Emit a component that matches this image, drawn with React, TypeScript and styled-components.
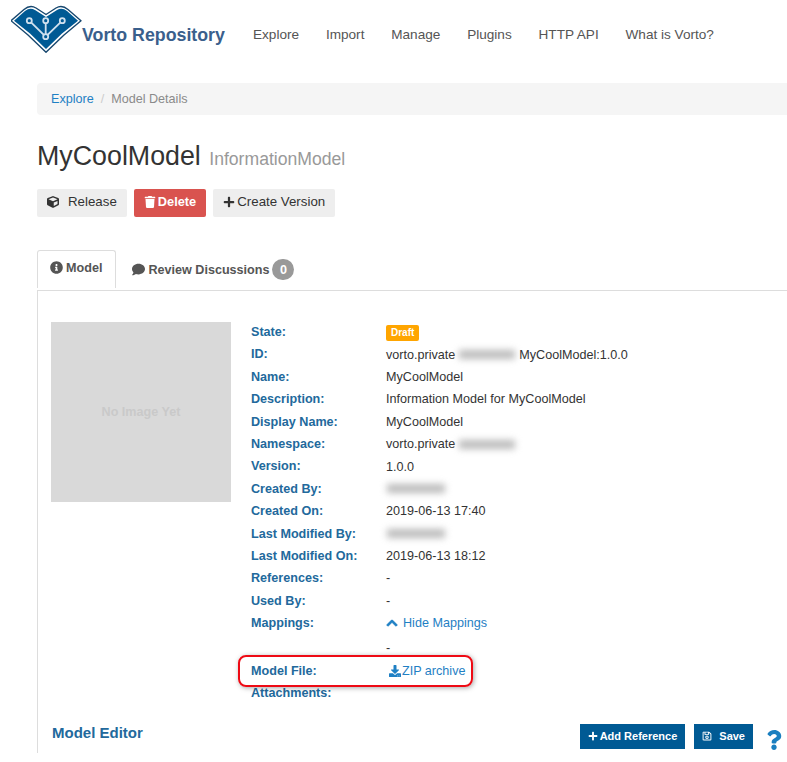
import { FC, Fragment, ReactNode } from "react";
import styled, { createGlobalStyle } from "styled-components";
import {
  FaChevronUp,
  FaComment,
  FaCube,
  FaDownload,
  FaInfoCircle,
  FaPlus,
  FaQuestion,
  FaRegSave,
  FaTrash,
} from "react-icons/fa";

const GlobalStyle = createGlobalStyle`
  html, body {
    margin: 0;
    padding: 0;
    background: #fff;
    overflow: hidden;
  }
  body {
    width: 787px;
    height: 762px;
    font-family: "Liberation Sans", Arial, sans-serif;
    font-size: 12.6px;
    color: #333;
  }
`;

const Page = styled.div`
  width: 787px;
  height: 762px;
  overflow: hidden;
  position: relative;
`;

const Navbar = styled.header`
  display: flex;
  align-items: flex-start;
  height: 83px;
  padding-left: 11px;
  box-sizing: border-box;
`;

const Brand = styled.div`
  display: flex;
  width: 242px;
  flex-shrink: 0;
`;

const BrandName = styled.span`
  margin: 25px 0 0;
  font-size: 17.8px;
  line-height: 21px;
  font-weight: 700;
  color: #3a5f8c;
  white-space: nowrap;
`;

const NavList = styled.nav`
  display: flex;
  gap: 26.800px;
  padding-top: 27px;
`;

const NavItem = styled.a`
  font-size: 13.6px;
  line-height: 16px;
  color: #555;
`;

const Content = styled.main`
  padding-left: 37px;
`;

const Breadcrumb = styled.div`
  display: flex;
  align-items: center;
  height: 32px;
  padding-left: 14px;
  background: #f5f5f5;
  border-radius: 4px 0 0 4px;
  color: #8a8a8a;
`;

const CrumbLink = styled.a`
  color: #1f80c4;
`;

const CrumbDivider = styled.span`
  padding: 0 7px;
  color: #ccc;
`;

const Title = styled.h1`
  margin: 26px 0 0;
  font-size: 26.8px;
  line-height: 31px;
  font-weight: 400;
  color: #333;
`;

const Subtitle = styled.small`
  font-size: 17.6px;
  color: #999;
  margin-left: 1px;
`;

const ButtonRow = styled.div`
  display: flex;
  gap: 7px;
  margin-top: 14px;
`;

const Button = styled.button<{ $variant?: "danger" | "primary" }>`
  display: inline-flex;
  align-items: center;
  justify-content: center;
  box-sizing: border-box;
  border: 0;
  padding: 0 10px 3px;
  height: 28px;
  border-radius: 2px;
  font-family: inherit;
  font-size: ${({ $variant }) => ($variant === "danger" ? "12.8px" : "13.3px")};
  font-weight: ${({ $variant }) => ($variant === "danger" ? 700 : 400)};
  background: ${({ $variant }) =>
    $variant === "danger" ? "#d9534f" : "#eeeeee"};
  color: ${({ $variant }) => ($variant === "danger" ? "#fff" : "#333")};
`;

const ButtonIcon = styled.span<{ $gap: number }>`
  display: inline-flex;
  font-size: 12px;
  margin-right: ${({ $gap }) => $gap}px;
`;

const Tabs = styled.div`
  display: flex;
  margin-top: 33px;
  height: 40px;
`;

const Tab = styled.div<{ $active?: boolean }>`
  display: flex;
  align-items: center;
  box-sizing: border-box;
  font-weight: 700;
  color: #555;
  height: ${({ $active }) => ($active ? "38px" : "36px")};
  padding: ${({ $active }) => ($active ? "0 13px 4px 12px" : "3px 0 0 16px")};
  ${({ $active }) =>
    $active
      ? `border: 1px solid #ddd; border-bottom: 0; border-radius: 3px 3px 0 0;`
      : ""}
`;

const TabIcon = styled.span`
  display: inline-flex;
  font-size: 13px;
  margin-right: 3px;
`;

const Badge = styled.span`
  display: inline-flex;
  align-items: center;
  justify-content: center;
  width: 22px;
  height: 21px;
  margin-left: 3px;
  border-radius: 11px;
  background: #999;
  color: #fff;
`;

const Panel = styled.section`
  height: 463px;
  box-sizing: border-box;
  border-top: 1px solid #ddd;
  border-left: 1px solid #ddd;
  padding: 31px 0 0 13px;
`;

const DetailLayout = styled.div`
  display: flex;
  align-items: flex-start;
`;

const Placeholder = styled.div`
  display: flex;
  align-items: center;
  justify-content: center;
  width: 180px;
  height: 180px;
  flex-shrink: 0;
  background: #d9d9d9;
  color: #c9c9c9;
  font-weight: 700;
`;

const Details = styled.dl`
  margin: -1px 0 0 20px;
  display: grid;
  grid-template-columns: 135px 1fr;
  align-items: center;
  width: 420px;
`;

const Label = styled.dt`
  height: 22.4px;
  line-height: 22.4px;
  font-weight: 700;
  color: #22699c;
  white-space: nowrap;
`;

const Value = styled.dd`
  display: flex;
  align-items: center;
  height: 22.4px;
  margin: 0;
  white-space: nowrap;
  color: #333;
`;

const DashRow = styled.div`
  grid-column: 1 / 3;
  padding: 3px 0 0 135px;
  line-height: 22.4px;
`;

const DraftLabel = styled.span`
  display: inline-block;
  padding: 1px 5px;
  margin-top: 2px;
  background: #ffa500;
  color: #fff;
  border-radius: 2px;
  font-size: 10px;
  font-weight: 700;
  line-height: 14px;
`;

const Redacted = styled.span<{ $width: number; $side: number }>`
  display: inline-block;
  width: ${({ $width }) => $width}px;
  height: 9px;
  margin: 0 ${({ $side }) => $side}px;
  background: #bbbbbb;
  filter: blur(3.500px);
`;

const Anchor = styled.a`
  display: inline-flex;
  align-items: center;
  color: #1f80c4;
`;

const AnchorIcon = styled.span<{ $inset?: number; $gap: number }>`
  display: inline-flex;
  font-size: 12px;
  margin-left: ${({ $inset = 0 }) => $inset}px;
  margin-right: ${({ $gap }) => $gap}px;
`;

const HeavyChevron = styled(FaChevronUp)`
  stroke: currentColor;
  stroke-width: 40px;
`;

const Highlight = styled.div`
  position: absolute;
  left: 238px;
  top: 655px;
  width: 235px;
  height: 32px;
  box-sizing: border-box;
  border: 2px solid #ee0a14;
  border-radius: 8px;
  box-shadow: 1px 1px 5px rgba(0, 0, 0, 0.35);
  pointer-events: none;
`;

const EditorBar = styled.div`
  display: flex;
  align-items: flex-start;
  margin-top: 19px;
  padding: 0 3px 0 1px;
`;

const EditorTitle = styled.h3`
  flex: 1;
  margin: 1px 0 0;
  font-size: 15px;
  line-height: 16px;
  font-weight: 700;
  color: #22699c;
`;

const ActionButton = styled.button`
  display: inline-flex;
  align-items: center;
  box-sizing: border-box;
  height: 25px;
  padding: 0 8px;
  margin-right: 9px;
  border: 0;
  background: #005a94;
  color: #fff;
  font-family: inherit;
  font-size: 11px;
  font-weight: 700;
`;

const ActionIcon = styled.span<{ $gap: number }>`
  display: inline-flex;
  font-size: 10px;
  margin-right: ${({ $gap }) => $gap}px;
`;

const HelpIcon = styled.span`
  display: inline-flex;
  margin: 6px 0 0 2px;
  font-size: 20px;
  color: #1a7fc0;
`;

const Logo: FC = () => (
  <svg width="71" height="54" viewBox="0 0 71 54">
    <path
      d="M0 20.700 L13 9.500 Q19 4.500 25 8 L35 14.500 L45 8 Q51 4.500 57 9.500 L70 20.700 L53 35 L35 52.300 L17 35 Z"
      fill="#fff"
      stroke="#17476e"
      strokeWidth="1.4"
      strokeLinejoin="round"
    />
    <path
      d="M3 20.700 L14 11 Q19 7 24 10 L35 17 L46 10 Q51 7 56 11 L67 20.700 L51 33.500 L35 49 L19 33.500 Z"
      fill="#005a94"
    />
    <g stroke="#cfe0ee" strokeWidth="1.800" fill="none">
      <path d="M18.300 20.700 L34.700 36.700 L51.300 20.700 M34.700 20.700 L34.700 36.700" />
      <circle cx="18.300" cy="20.700" r="2.500" fill="#005a94" />
      <circle cx="51.300" cy="20.700" r="2.500" fill="#005a94" />
      <circle cx="34.700" cy="20.700" r="2.500" fill="#005a94" />
      <circle cx="34.700" cy="36.700" r="2.500" fill="#005a94" />
    </g>
  </svg>
);

interface IRow {
  label: string;
  value: ReactNode;
}

const rows: IRow[] = [
  { label: "State:", value: <DraftLabel>Draft</DraftLabel> },
  {
    label: "ID:",
    value: (
      <>
        vorto.private
        <Redacted $width={56} $side={4} />
        MyCoolModel:1.0.0
      </>
    ),
  },
  { label: "Name:", value: "MyCoolModel" },
  { label: "Description:", value: "Information Model for MyCoolModel" },
  { label: "Display Name:", value: "MyCoolModel" },
  {
    label: "Namespace:",
    value: (
      <>
        vorto.private
        <Redacted $width={56} $side={4} />
      </>
    ),
  },
  { label: "Version:", value: "1.0.0" },
  { label: "Created By:", value: <Redacted $width={58} $side={1} /> },
  { label: "Created On:", value: "2019-06-13 17:40" },
  { label: "Last Modified By:", value: <Redacted $width={58} $side={1} /> },
  { label: "Last Modified On:", value: "2019-06-13 18:12" },
  { label: "References:", value: "-" },
  { label: "Used By:", value: "-" },
  {
    label: "Mappings:",
    value: (
      <Anchor>
        <AnchorIcon $gap={5}>
          <HeavyChevron />
        </AnchorIcon>
        Hide Mappings
      </Anchor>
    ),
  },
];

const App: FC = () => (
  <Page>
    <GlobalStyle />
    <Navbar>
      <Brand>
        <Logo />
        <BrandName>Vorto Repository</BrandName>
      </Brand>
      <NavList>
        {["Explore", "Import", "Manage", "Plugins", "HTTP API", "What is Vorto?"].map((item) => (
          <NavItem key={item}>{item}</NavItem>
        ))}
      </NavList>
    </Navbar>
    <Content>
      <Breadcrumb>
        <CrumbLink>Explore</CrumbLink>
        <CrumbDivider>/</CrumbDivider>
        Model Details
      </Breadcrumb>
      <Title>
        MyCoolModel <Subtitle>InformationModel</Subtitle>
      </Title>
      <ButtonRow>
        <Button>
          <ButtonIcon $gap={9}>
            <FaCube />
          </ButtonIcon>
          Release
        </Button>
        <Button $variant="danger">
          <ButtonIcon $gap={2}>
            <FaTrash />
          </ButtonIcon>
          Delete
        </Button>
        <Button>
          <ButtonIcon $gap={2}>
            <FaPlus />
          </ButtonIcon>
          Create Version
        </Button>
      </ButtonRow>
      <Tabs>
        <Tab $active>
          <TabIcon>
            <FaInfoCircle />
          </TabIcon>
          Model
        </Tab>
        <Tab>
          <TabIcon>
            <FaComment />
          </TabIcon>
          Review Discussions
          <Badge>0</Badge>
        </Tab>
      </Tabs>
      <Panel>
        <DetailLayout>
          <Placeholder>No Image Yet</Placeholder>
          <Details>
            {rows.map((row) => (
              <Fragment key={row.label}>
                <Label>{row.label}</Label>
                <Value>{row.value}</Value>
              </Fragment>
            ))}
            <DashRow>-</DashRow>
            <Label>Model File:</Label>
            <Value>
              <Anchor>
                <AnchorIcon $inset={3} $gap={1}>
                  <FaDownload />
                </AnchorIcon>
                ZIP archive
              </Anchor>
            </Value>
            <Label>Attachments:</Label>
            <Value />
          </Details>
        </DetailLayout>
        <EditorBar>
          <EditorTitle>Model Editor</EditorTitle>
          <ActionButton>
            <ActionIcon $gap={2}>
              <FaPlus />
            </ActionIcon>
            Add Reference
          </ActionButton>
          <ActionButton>
            <ActionIcon $gap={7}>
              <FaRegSave />
            </ActionIcon>
            Save
          </ActionButton>
          <HelpIcon>
            <FaQuestion />
          </HelpIcon>
        </EditorBar>
      </Panel>
    </Content>
    <Highlight />
  </Page>
);

export default App;
